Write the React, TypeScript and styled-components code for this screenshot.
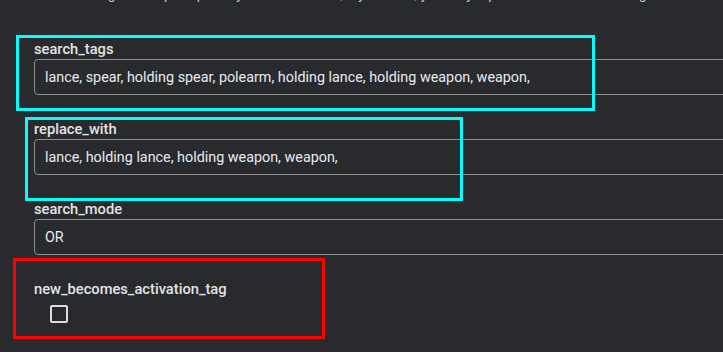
import styled, { createGlobalStyle } from 'styled-components';

const Global = createGlobalStyle`
    html, body {
        margin: 0;
        padding: 0;
        background: #292a2d;
        overflow: hidden;
    }
    body {
        font-family: Roboto, "Liberation Sans", sans-serif;
        color: #e8eaed;
    }
`;

const Page = styled.div`
    position: relative;
    width: 723px;
    height: 352px;
    overflow: hidden;
`;

const Intro = styled.p`
    margin: -14px 0 0 28px;
    font-size: 14px;
    line-height: 16px;
    color: #c4c7c5;
    white-space: nowrap;
`;

const Form = styled.div`
    display: flex;
    flex-direction: column;
    width: 760px;
    padding: 37px 0 0 34px;
`;

const Field = styled.div<{ gap?: number }>`
    display: flex;
    flex-direction: column;
    margin-bottom: ${p => p.gap ?? 24}px;
`;

const Label = styled.label`
    font-size: 14.7px;
    font-weight: 500;
    line-height: 20px;
    color: #e3e3e3;
`;

const Input = styled.div`
    box-sizing: border-box;
    height: 36px;
    border: 1px solid #8e8e8e;
    border-radius: 4px;
    padding: 0 10px;
    display: flex;
    align-items: center;
    font-size: 14.35px;
    color: #e8eaed;
`;

const CheckRow = styled.div`
    padding: 6px 0 0 16px;
`;

const Check = styled.span`
    display: block;
    box-sizing: border-box;
    width: 18px;
    height: 18px;
    border: 2px solid #dcdcdc;
    border-radius: 2px;
`;

// annotation rectangles drawn over the form
const Mark = styled.div<{ c: string; x: number; y: number; w: number; h: number }>`
    position: absolute;
    box-sizing: border-box;
    left: ${p => p.x}px;
    top: ${p => p.y}px;
    width: ${p => p.w}px;
    height: ${p => p.h}px;
    border: 3px solid ${p => p.c};
    pointer-events: none;
`;

const fields = [
    { name: 'search_tags', value: 'lance, spear, holding spear, polearm, holding lance, holding weapon, weapon,' },
    { name: 'replace_with', value: 'lance, holding lance, holding weapon, weapon,' },
    { name: 'search_mode', value: 'OR' },
];

const App = () => (
    <Page>
        <Global />
        <Intro>
            Search for tags in the prompts of your dataset and, if you want, you may replace them with other tags or remove them entirely.
        </Intro>
        <Form>
            {fields.map(f => (
                <Field key={f.name}>
                    <Label>{f.name}</Label>
                    <Input>{f.value}</Input>
                </Field>
            ))}
            <Field gap={0}>
                <Label>new_becomes_activation_tag</Label>
                <CheckRow>
                    <Check />
                </CheckRow>
            </Field>
        </Form>
        <Mark c="#00ffff" x={16} y={35} w={579} h={76} />
        <Mark c="#00ffff" x={25} y={117} w={438} h={84} />
        <Mark c="#ff0000" x={13} y={258} w={312} h={81} />
    </Page>
);

export default App;
